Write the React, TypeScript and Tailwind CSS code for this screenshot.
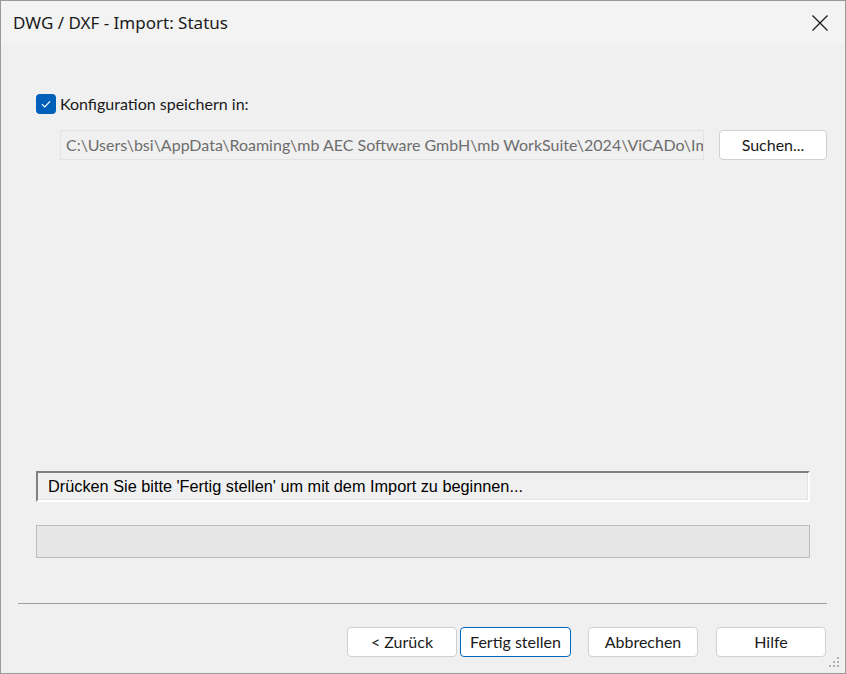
import React from 'react';

const title = { fontFamily: '"Segoe UI", "Noto Sans", sans-serif' };
const ui = { fontFamily: '"Segoe UI", Lato, "Noto Sans", sans-serif' };
const classic = { fontFamily: '"Liberation Sans", Arial, sans-serif' };

function DialogButton({ label, primary }: { label: string; primary?: boolean }) {
  return (
    <button
      className={`h-[30px] w-[110px] rounded-[4px] bg-white text-[16px] text-[#1a1a1a] ${
        primary ? 'border border-[#0067c0]' : 'border border-[#d0d0d0]'
      }`}
      style={ui}
    >
      {label}
    </button>
  );
}

export default function App() {
  return (
    <div className="flex h-[674px] w-[846px] flex-col overflow-hidden border border-[#9a9a9a] bg-[#f0f0f0]" style={ui}>
      <div className="flex h-[43px] shrink-0 items-center justify-between bg-[#f3f3f3] pl-[12px] pr-[16px]" style={title}>
        <span className="text-[17px] text-[#1a1a1a]">DWG / DXF - Import: Status</span>
        <svg width="18" height="18" viewBox="0 0 18 18" className="mt-[1px]">
          <path d="M1.5 1.5 L16.5 16.5 M16.5 1.5 L1.5 16.5" stroke="#1a1a1a" strokeWidth="1.3" />
        </svg>
      </div>

      <div className="relative flex flex-1 flex-col">
        <div className="ml-[35px] mt-[50px] flex h-[20px] items-center gap-[4px]">
          <span className="flex h-[20px] w-[20px] items-center justify-center rounded-[4px] bg-[#005fb8]">
            <svg width="12" height="12" viewBox="0 0 12 12">
              <path d="M2 6.3 L4.8 9 L10 3.3" fill="none" stroke="#ffffff" strokeWidth="1.2" />
            </svg>
          </span>
          <span className="text-[16px] text-[#1a1a1a]">Konfiguration speichern in:</span>
        </div>

        <div className="ml-[59px] mt-[16px] flex h-[30px] items-center">
          <div className="h-[30px] w-[644px] shrink-0 overflow-hidden border border-[#e3e3e3] bg-[#f0f0f0]">
            <div className="whitespace-nowrap pl-[5px] text-[16px] leading-[28px] text-[#6d6d6d]">
              C:\Users\bsi\AppData\Roaming\mb AEC Software GmbH\mb WorkSuite\2024\ViCADo\Import
            </div>
          </div>
          <div className="ml-[15px]">
            <button className="h-[30px] w-[108px] rounded-[4px] border border-[#d0d0d0] bg-white text-[16px] text-[#1a1a1a]" style={ui}>
              Suchen...
            </button>
          </div>
        </div>

        <div className="ml-[35px] mt-[311px] h-[31px] w-[774px] border-b-2 border-l-2 border-r-2 border-t-2 border-b-white border-l-[#808080] border-r-white border-t-[#808080]">
          <div className="flex h-full items-center border-b border-r border-b-[#e3e3e3] border-r-[#e3e3e3] pl-[10px] text-[16.3px] text-[#000000]" style={classic}>
            Drücken Sie bitte 'Fertig stellen' um mit dem Import zu beginnen...
          </div>
        </div>

        <div className="ml-[35px] mt-[23px] h-[33px] w-[774px] border border-[#bcbcbc] bg-[#e6e6e6]" />

        <div className="ml-[17px] mt-[45px] h-px w-[809px] bg-[#a0a0a0]" />

        <div className="ml-[346px] mt-[23px] flex items-center">
          <DialogButton label="< Zurück" />
          <div className="ml-[3px]">
            <button className="h-[30px] w-[111px] rounded-[4px] border border-[#0067c0] bg-white text-[16px] text-[#1a1a1a]" style={ui}>
              Fertig stellen
            </button>
          </div>
          <div className="ml-[17px]">
            <DialogButton label="Abbrechen" />
          </div>
          <div className="ml-[18px]">
            <DialogButton label="Hilfe" />
          </div>
        </div>

        <svg width="12" height="12" viewBox="0 0 12 12" className="absolute bottom-[4px] right-[4px]">
          <rect x="8" y="0" width="2" height="2" fill="#b0b0b0" />
          <rect x="4" y="4" width="2" height="2" fill="#b0b0b0" />
          <rect x="8" y="4" width="2" height="2" fill="#b0b0b0" />
          <rect x="0" y="8" width="2" height="2" fill="#b0b0b0" />
          <rect x="4" y="8" width="2" height="2" fill="#b0b0b0" />
          <rect x="8" y="8" width="2" height="2" fill="#b0b0b0" />
        </svg>
      </div>
    </div>
  );
}
